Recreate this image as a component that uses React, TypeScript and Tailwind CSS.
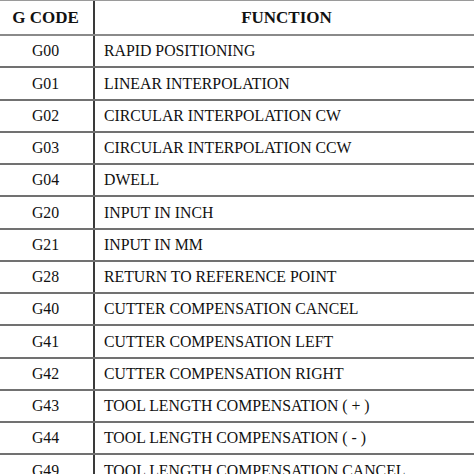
import React from "react";

const rows: [string, string][] = [
  ["G00", "RAPID POSITIONING"],
  ["G01", "LINEAR INTERPOLATION"],
  ["G02", "CIRCULAR INTERPOLATION CW"],
  ["G03", "CIRCULAR INTERPOLATION CCW"],
  ["G04", "DWELL"],
  ["G20", "INPUT IN INCH"],
  ["G21", "INPUT IN MM"],
  ["G28", "RETURN TO REFERENCE POINT"],
  ["G40", "CUTTER COMPENSATION CANCEL"],
  ["G41", "CUTTER COMPENSATION LEFT"],
  ["G42", "CUTTER COMPENSATION RIGHT"],
  ["G43", "TOOL LENGTH COMPENSATION ( + )"],
  ["G44", "TOOL LENGTH COMPENSATION ( - )"],
  ["G49", "TOOL LENGTH COMPENSATION CANCEL"],
];

export default function App() {
  return (
    <div className="w-[474px] h-[474px] overflow-hidden bg-white text-[#111111] font-['Liberation_Serif','Times_New_Roman',serif]">
      <div className="w-[480px] -ml-[2px]">
        <div className="flex h-[36px] border-t-[1.5px] border-b-2 border-t-[#9a9a9a] border-b-[#8a8a8a]">
          <div className="w-[97px] flex items-center justify-center border-r-2 border-[#3a3a3a] text-[17px] font-bold">
            G CODE
          </div>
          <div className="flex-1 flex items-center justify-center text-[17px] font-bold">
            FUNCTION
          </div>
        </div>
        {rows.map(([code, fn]) => (
          <div key={code} className="flex h-[32.25px] border-b-2 border-[#717171]">
            <div className="w-[97px] flex items-center justify-center border-r-2 border-[#3a3a3a] text-[15.8px]">
              {code}
            </div>
            <div className="flex-1 flex items-center pl-[9px] text-[15.8px]">
              {fn}
            </div>
          </div>
        ))}
      </div>
    </div>
  );
}
